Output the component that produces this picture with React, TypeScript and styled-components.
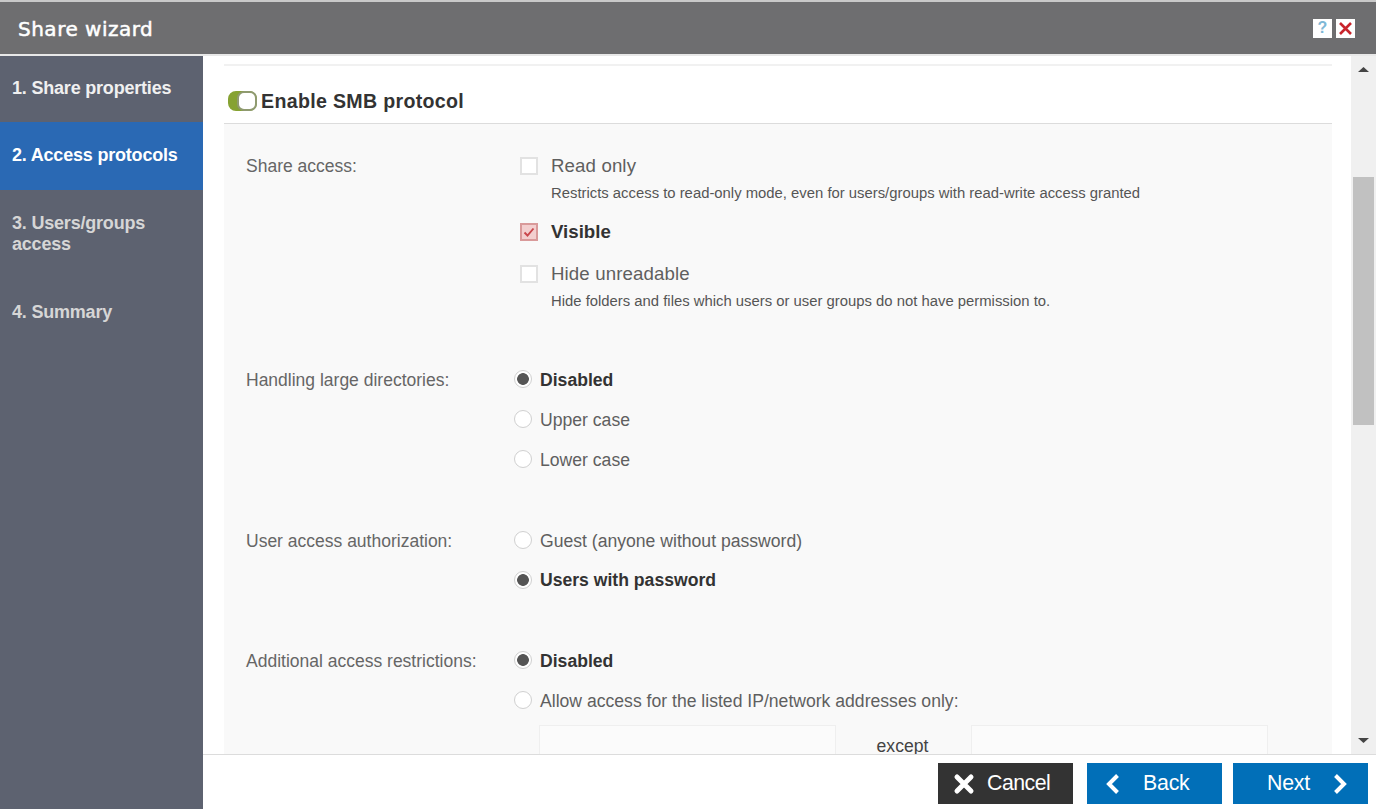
import React from "react";
import styled, { createGlobalStyle } from "styled-components";

const Global = createGlobalStyle`
  html, body { margin: 0; padding: 0; height: 100%; overflow: hidden; background: #fff; }
  #root { height: 100%; }
  * { box-sizing: border-box; }
`;

const Wizard = styled.div`
  width: 1376px;
  height: 809px;
  display: flex;
  flex-direction: column;
  font-family: "Liberation Sans", Arial, sans-serif;
  color: #5f5f5f;
  background: #fff;
  overflow: hidden;
`;
const Header = styled.header`
  height: 56px;
  flex: none;
  display: flex;
  align-items: center;
  justify-content: space-between;
  padding: 0 21px 0 18px;
  background: #6e6e70;
  border-top: 2px solid #c9c9c9;
  border-bottom: 2px solid #e8e8e8;
`;
const Title = styled.h1`
  margin: 2px 0 0;
  font-family: "DejaVu Sans", sans-serif;
  font-size: 20px;
  font-weight: 500;
  letter-spacing: 0.5px;
  color: #fff;
  -webkit-text-stroke: 0.5px #fff;
`;
const WindowButtons = styled.div`
  display: flex;
  gap: 4px;
`;
const WindowButton = styled.span`
  width: 19px;
  height: 19px;
  display: flex;
  align-items: center;
  justify-content: center;
  background: #fff;
  font: bold 16px "Liberation Sans", sans-serif;
  color: #7fb8d6;
`;
const Body = styled.div`
  flex: 1;
  min-height: 0;
  display: flex;
`;
const Sidebar = styled.nav`
  width: 203px;
  flex: none;
  background: #5d6270;
`;
const Step = styled.div<{ $active?: boolean; $height: number }>`
  height: ${(p) => p.$height}px;
  padding: 23px 12px 0;
  font-size: 18px;
  line-height: 21px;
  font-weight: bold;
  letter-spacing: -0.2px;
  color: ${(p) => (p.$active ? "#fff" : "#d6d6d6")};
  background: ${(p) => (p.$active ? "#2a69b4" : "transparent")};
  &:first-child {
    padding-top: 22px;
    color: #f0f0f0;
  }
`;
const Main = styled.div`
  flex: 1;
  min-width: 0;
  display: flex;
  flex-direction: column;
`;
const ContentRow = styled.div`
  flex: 1;
  min-height: 0;
  display: flex;
`;
const Content = styled.div`
  flex: 1;
  min-width: 0;
  overflow: hidden;
  padding: 8px 19px 0 21px;
`;
const Section = styled.section`
  border-top: 2px solid #f1f1f1;
`;
const SectionHead = styled.div`
  height: 58px;
  display: flex;
  align-items: center;
  gap: 4px;
  padding: 12px 0 0 4px;
  border-bottom: 1px solid #dcdcdc;
`;
const Toggle = styled.span`
  position: relative;
  width: 29px;
  height: 20px;
  border-radius: 8px;
  background: #86a232;
`;
const Knob = styled.span`
  position: absolute;
  top: 0;
  right: 0;
  width: 20px;
  height: 20px;
  border-radius: 7px;
  background: #fff;
  border: 2px solid #8f9a70;
`;
const SectionTitle = styled.h2`
  margin: 2px 0 0;
  font-size: 19.6px;
  font-weight: bold;
  color: #333;
  letter-spacing: 0.32px;
`;
const Panel = styled.div`
  background: #f9f9f9;
  padding: 0 0 0 22px;
`;
const Group = styled.div<{ $height: number }>`
  height: ${(p) => p.$height}px;
  display: grid;
  grid-template-columns: 268px 1fr;
`;
const GroupLabel = styled.div<{ $top: number }>`
  padding-top: ${(p) => p.$top}px;
  font-size: 17.5px;
  line-height: 20px;
  color: #666;
`;
const Options = styled.div<{ $top: number }>`
  padding-top: ${(p) => p.$top}px;
`;
const CheckRow = styled.div<{ $gap?: number }>`
  display: flex;
  align-items: center;
  height: 24px;
  padding-left: 6px;
  margin-top: ${(p) => p.$gap ?? 0}px;
`;
const Box = styled.span<{ $on?: boolean }>`
  width: 18px;
  height: 18px;
  flex: none;
  display: flex;
  align-items: center;
  justify-content: center;
  margin: 0 13px 1px 0;
  border: 2px solid ${(p) => (p.$on ? "#d99a9a" : "#e2e2e2")};
  background: ${(p) => (p.$on ? "#f3cfcf" : "#fff")};
`;
const CheckText = styled.span<{ $on?: boolean }>`
  font-size: 18.67px;
  font-weight: ${(p) => (p.$on ? "bold" : "normal")};
  letter-spacing: ${(p) => (p.$on ? "0" : "0.12px")};
  color: ${(p) => (p.$on ? "#333" : "#5f5f5f")};
`;
const Hint = styled.div`
  margin: 5px 0 0 37px;
  height: 20px;
  font-size: 14.85px;
  line-height: 20px;
  color: #555;
`;
const RadioRow = styled.div<{ $step: number }>`
  height: ${(p) => p.$step}px;
  display: flex;
  align-items: center;
`;
const Radio = styled.span<{ $on?: boolean }>`
  width: 18px;
  height: 18px;
  flex: none;
  margin: 0 8px 2px 0;
  border-radius: 50%;
  border: 1px solid #d0d0d0;
  background: ${(p) => (p.$on ? "radial-gradient(circle, #555 0 5.5px, #fff 6.2px)" : "#fff")};
`;
const RadioText = styled.span<{ $on?: boolean }>`
  font-size: 17.6px;
  font-weight: ${(p) => (p.$on ? "bold" : "normal")};
  color: ${(p) => (p.$on ? "#333" : "#5f5f5f")};
`;
const AddressRow = styled.div`
  display: flex;
  margin: 4px 0 0 25px;
`;
const AddressBox = styled.div`
  width: 297px;
  height: 60px;
  flex: none;
  background: #fbfbfb;
  border: 1px solid #efefef;
`;
const Except = styled.div`
  width: 135px;
  flex: none;
  padding: 11px 2px 0 0;
  text-align: center;
  font-size: 17.6px;
  line-height: 20px;
  color: #444;
`;
const Scrollbar = styled.div`
  width: 25px;
  flex: none;
  display: flex;
  flex-direction: column;
  align-items: center;
  background: #f0f0f0;
`;
const ScrollArrow = styled.div<{ $down?: boolean }>`
  height: 20px;
  flex: none;
  display: flex;
  align-items: center;
  justify-content: center;
  margin: ${(p) => (p.$down ? "auto 0 4px" : "3px 0 0")};
  color: #444;
`;
const ScrollThumb = styled.div`
  width: 21px;
  height: 248px;
  margin-top: 98px;
  background: #c1c1c1;
`;
const Footer = styled.footer`
  height: 55px;
  flex: none;
  display: flex;
  justify-content: flex-end;
  padding: 8px 8px 0 0;
  border-top: 1px solid #dcdcdc;
  background: #fff;
`;
const FooterButton = styled.button<{ $dark?: boolean; $gap?: number }>`
  width: 135px;
  height: 41px;
  border: none;
  padding: 0;
  margin-left: ${(p) => p.$gap ?? 0}px;
  display: flex;
  align-items: center;
  background: ${(p) => (p.$dark ? "#333333" : "#016fb8")};
  color: #fff;
  font: 21.3px "Liberation Sans", sans-serif;
  letter-spacing: -0.2px;
`;
const CancelLabel = styled.span`
  margin-left: 12px;
  letter-spacing: -0.5px;
`;
const CancelIcon = styled.svg`
  margin-left: 15px;
`;
const BackIcon = styled.svg`
  margin-left: 17px;
`;
const BackLabel = styled.span`
  margin-left: 23px;
`;
const NextLabel = styled.span`
  margin-left: 34px;
`;
const NextIcon = styled.svg`
  margin-left: 23px;
`;

const Check = () => (
  <svg width="12" height="12" viewBox="0 0 12 12">
    <path d="M1.5 6.5 L4.5 9.5 L10.5 2.5" fill="none" stroke="#c9474c" strokeWidth="1.9" />
  </svg>
);

export default function App() {
  return (
    <Wizard>
      <Global />
      <Header>
        <Title>Share wizard</Title>
        <WindowButtons>
          <WindowButton>?</WindowButton>
          <WindowButton>
            <svg width="15" height="15" viewBox="0 0 15 15">
              <path d="M2 2 L13 13 M13 2 L2 13" stroke="#c8242c" strokeWidth="2.6" />
            </svg>
          </WindowButton>
        </WindowButtons>
      </Header>
      <Body>
        <Sidebar>
          <Step $height={66}>1. Share properties</Step>
          <Step $height={68} $active>2. Access protocols</Step>
          <Step $height={89}>3. Users/groups access</Step>
          <Step $height={60}>4. Summary</Step>
        </Sidebar>
        <Main>
          <ContentRow>
            <Content>
              <Section>
                <SectionHead>
                  <Toggle><Knob /></Toggle>
                  <SectionTitle>Enable SMB protocol</SectionTitle>
                </SectionHead>
                <Panel>
                  <Group $height={219}>
                    <GroupLabel $top={32}>Share access:</GroupLabel>
                    <Options $top={30}>
                      <CheckRow><Box /><CheckText>Read only</CheckText></CheckRow>
                      <Hint>Restricts access to read-only mode, even for users/groups with read-write access granted</Hint>
                      <CheckRow $gap={17}><Box $on><Check /></Box><CheckText $on>Visible</CheckText></CheckRow>
                      <CheckRow $gap={18}><Box /><CheckText>Hide unreadable</CheckText></CheckRow>
                      <Hint>Hide folders and files which users or user groups do not have permission to.</Hint>
                    </Options>
                  </Group>
                  <Group $height={161}>
                    <GroupLabel $top={27}>Handling large directories:</GroupLabel>
                    <Options $top={17}>
                      <RadioRow $step={40}><Radio $on /><RadioText $on>Disabled</RadioText></RadioRow>
                      <RadioRow $step={40}><Radio /><RadioText>Upper case</RadioText></RadioRow>
                      <RadioRow $step={40}><Radio /><RadioText>Lower case</RadioText></RadioRow>
                    </Options>
                  </Group>
                  <Group $height={120}>
                    <GroupLabel $top={27}>User access authorization:</GroupLabel>
                    <Options $top={17}>
                      <RadioRow $step={40}><Radio /><RadioText>Guest (anyone without password)</RadioText></RadioRow>
                      <RadioRow $step={39}><Radio $on /><RadioText $on>Users with password</RadioText></RadioRow>
                    </Options>
                  </Group>
                  <Group $height={160}>
                    <GroupLabel $top={27}>Additional access restrictions:</GroupLabel>
                    <Options $top={17}>
                      <RadioRow $step={40}><Radio $on /><RadioText $on>Disabled</RadioText></RadioRow>
                      <RadioRow $step={40}><Radio /><RadioText>Allow access for the listed IP/network addresses only:</RadioText></RadioRow>
                      <AddressRow>
                        <AddressBox />
                        <Except>except</Except>
                        <AddressBox />
                      </AddressRow>
                    </Options>
                  </Group>
                </Panel>
              </Section>
            </Content>
            <Scrollbar>
              <ScrollArrow>
                <svg width="11" height="5" viewBox="0 0 11 5"><path d="M5.5 0 L11 5 H0 Z" fill="currentColor" /></svg>
              </ScrollArrow>
              <ScrollThumb />
              <ScrollArrow $down>
                <svg width="11" height="5" viewBox="0 0 11 5"><path d="M0 0 H11 L5.5 5 Z" fill="currentColor" /></svg>
              </ScrollArrow>
            </Scrollbar>
          </ContentRow>
          <Footer>
            <FooterButton $dark>
              <CancelIcon width="22" height="22" viewBox="0 0 22 22">
                <path d="M4 4 L18 18 M18 4 L4 18" stroke="#fff" strokeWidth="5" strokeLinecap="round" />
              </CancelIcon>
              <CancelLabel>Cancel</CancelLabel>
            </FooterButton>
            <FooterButton $gap={14}>
              <BackIcon width="16" height="22" viewBox="0 0 16 22">
                <path d="M13.5 2.5 L5 11 L13.5 19.5" fill="none" stroke="#fff" strokeWidth="4" />
              </BackIcon>
              <BackLabel>Back</BackLabel>
            </FooterButton>
            <FooterButton $gap={11}>
              <NextLabel>Next</NextLabel>
              <NextIcon width="16" height="22" viewBox="0 0 16 22">
                <path d="M2.5 2.5 L11 11 L2.5 19.5" fill="none" stroke="#fff" strokeWidth="4" />
              </NextIcon>
            </FooterButton>
          </Footer>
        </Main>
      </Body>
    </Wizard>
  );
}
